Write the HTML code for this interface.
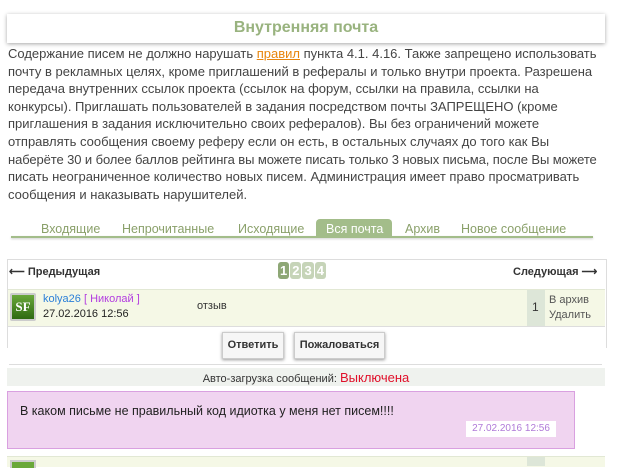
<html><head><style>
body{margin:0;width:619px;height:466px;overflow:hidden;background:#fff;font-family:"Liberation Sans",sans-serif;color:#333;position:relative}
.a{position:absolute}
</style></head><body>
<div class="a" style="left:7px;top:14px;width:598px;height:29px;background:#fff;box-shadow:0 1px 4px rgba(0,0,0,.35);text-align:center;line-height:28px;font-weight:bold;font-size:16px;color:#99b37f">Внутренняя почта</div>
<div class="a" style="left:8px;top:45px;width:610px;font-size:13px;line-height:17.6px;color:#444;white-space:nowrap">Содержание писем не должно нарушать <span style="color:#e8850c;text-decoration:underline">правил</span> пункта 4.1. 4.16. Также запрещено использовать<br>почту в рекламных целях, кроме приглашений в рефералы и только внутри проекта. Разрешена<br>передача внутренних ссылок проекта (ссылок на форум, ссылки на правила, ссылки на<br>конкурсы). Приглашать пользователей в задания посредством почты ЗАПРЕЩЕНО (кроме<br>приглашения в задания исключительно своих рефералов). Вы без ограничений можете<br>отправлять сообщения своему реферу если он есть, в остальных случаях до того как Вы<br><span style="letter-spacing:-0.1px">наберёте 30 и более баллов рейтинга вы можете писать только 3 новых письма, после Вы можете</span><br>писать неограниченное количество новых писем. Администрация имеет право просматривать<br>сообщения и наказывать нарушителей.</div>
<div class="a" style="left:11px;top:236px;width:582px;height:2px;background:#a3bd8a;box-shadow:0 1px 2px rgba(0,0,0,.2)"></div>
<div class="a" style="left:316px;top:219px;width:76px;height:19px;background:#a3bd8a;border-radius:4px 4px 0 0"></div>
<div class="a" style="top:222px;font-size:12.5px;color:#8aa06a;left:0;width:619px">
<span class="a" style="left:41px">Входящие</span><span class="a" style="left:122px">Непрочитанные</span><span class="a" style="left:238px">Исходящие</span><span class="a" style="left:326px;color:#fff">Вся почта</span><span class="a" style="left:405px">Архив</span><span class="a" style="left:461px">Новое сообщение</span></div>
<div class="a" style="left:7px;top:259px;width:598px;height:88px;border:1px solid #ddd;border-bottom:none"></div>
<div class="a" style="left:9px;top:265px;font-size:11px;font-weight:bold;color:#333">⟵ Предыдущая</div>
<div class="a" style="left:513px;top:265px;font-size:11px;font-weight:bold;color:#333">Следующая ⟶</div>
<div class="a" style="left:278px;top:263px;font-size:13px;color:#fff;font-weight:bold">
<span style="background:#8ea776;border-radius:3px;padding:1px 2px">1</span><span style="background:#c6d4b8;border-radius:3px;padding:1px 2px;margin-left:1px">2</span><span style="background:#c6d4b8;border-radius:3px;padding:1px 2px;margin-left:1px">3</span><span style="background:#c6d4b8;border-radius:3px;padding:1px 2px;margin-left:1px">4</span></div>
<div class="a" style="left:8px;top:289px;width:597px;height:36px;background:#f5f8e6;border-top:1px solid #e2e8d4;border-bottom:1px solid #ddd"></div>
<div class="a" style="left:527px;top:290px;width:18px;height:36px;background:#dde6d8"></div>
<div class="a" style="left:10px;top:293px;width:22px;height:24px;background:linear-gradient(#6aa83a,#2e6a12);border:2px solid #ccc;border-radius:2px;color:#fff;font:bold 13px 'Liberation Serif',serif;text-align:center;line-height:24px">SF</div>
<div class="a" style="left:43px;top:293px;font-size:11px;color:#2b7fd8">kolya26 <span style="color:#b23ce0">[ Николай ]</span></div>
<div class="a" style="left:43px;top:308px;font-size:11px;color:#222">27.02.2016 12:56</div>
<div class="a" style="left:197px;top:300px;font-size:11px;color:#333">отзыв</div>
<div class="a" style="left:532px;top:300px;font-size:12px">1</div>
<div class="a" style="left:549px;top:293px;font-size:11px;color:#555;line-height:15px">В архив<br>Удалить</div>
<div class="a" style="left:222px;top:332px;width:60px;height:25px;background:#f6f6f6;border:1px solid #ccc;box-shadow:0 1px 3px rgba(0,0,0,.4);font-size:11px;font-weight:bold;text-align:center;line-height:25px">Ответить</div>
<div class="a" style="left:294px;top:332px;width:89px;height:25px;background:#f6f6f6;border:1px solid #ccc;box-shadow:0 1px 3px rgba(0,0,0,.4);font-size:11px;font-weight:bold;text-align:center;line-height:25px">Пожаловаться</div>
<div class="a" style="left:9px;top:364px;width:593px;height:1px;background:#ddd"></div>
<div class="a" style="left:7px;top:368px;width:598px;height:18px;background:#eff2ee;text-align:center;font-size:11px;line-height:19px;color:#333">Авто-загрузка сообщений: <span style="color:#e0102a;font-size:13px">Выключена</span></div>
<div class="a" style="left:7px;top:391px;width:568px;height:58px;background:#f0d4f0;border:1px solid #d9a0e0;box-sizing:border-box"></div>
<div class="a" style="left:20px;top:404px;font-size:12.5px;color:#222">В каком письме не правильный код идиотка у меня нет писем!!!!</div>
<div class="a" style="left:466px;top:421px;width:90px;height:16px;background:#fff;font-size:10px;color:#b07ad8;text-align:center;line-height:16px">27.02.2016 12:56</div>
<div class="a" style="left:7px;top:456px;width:598px;height:10px;background:#f5f8e6;border-top:1px solid #e2e8d4"></div>
<div class="a" style="left:527px;top:457px;width:18px;height:9px;background:#dde6d8"></div>
<div class="a" style="left:10px;top:460px;width:22px;height:6px;background:#6aa83a;border:2px solid #ccc;border-bottom:none"></div>
</body></html>
